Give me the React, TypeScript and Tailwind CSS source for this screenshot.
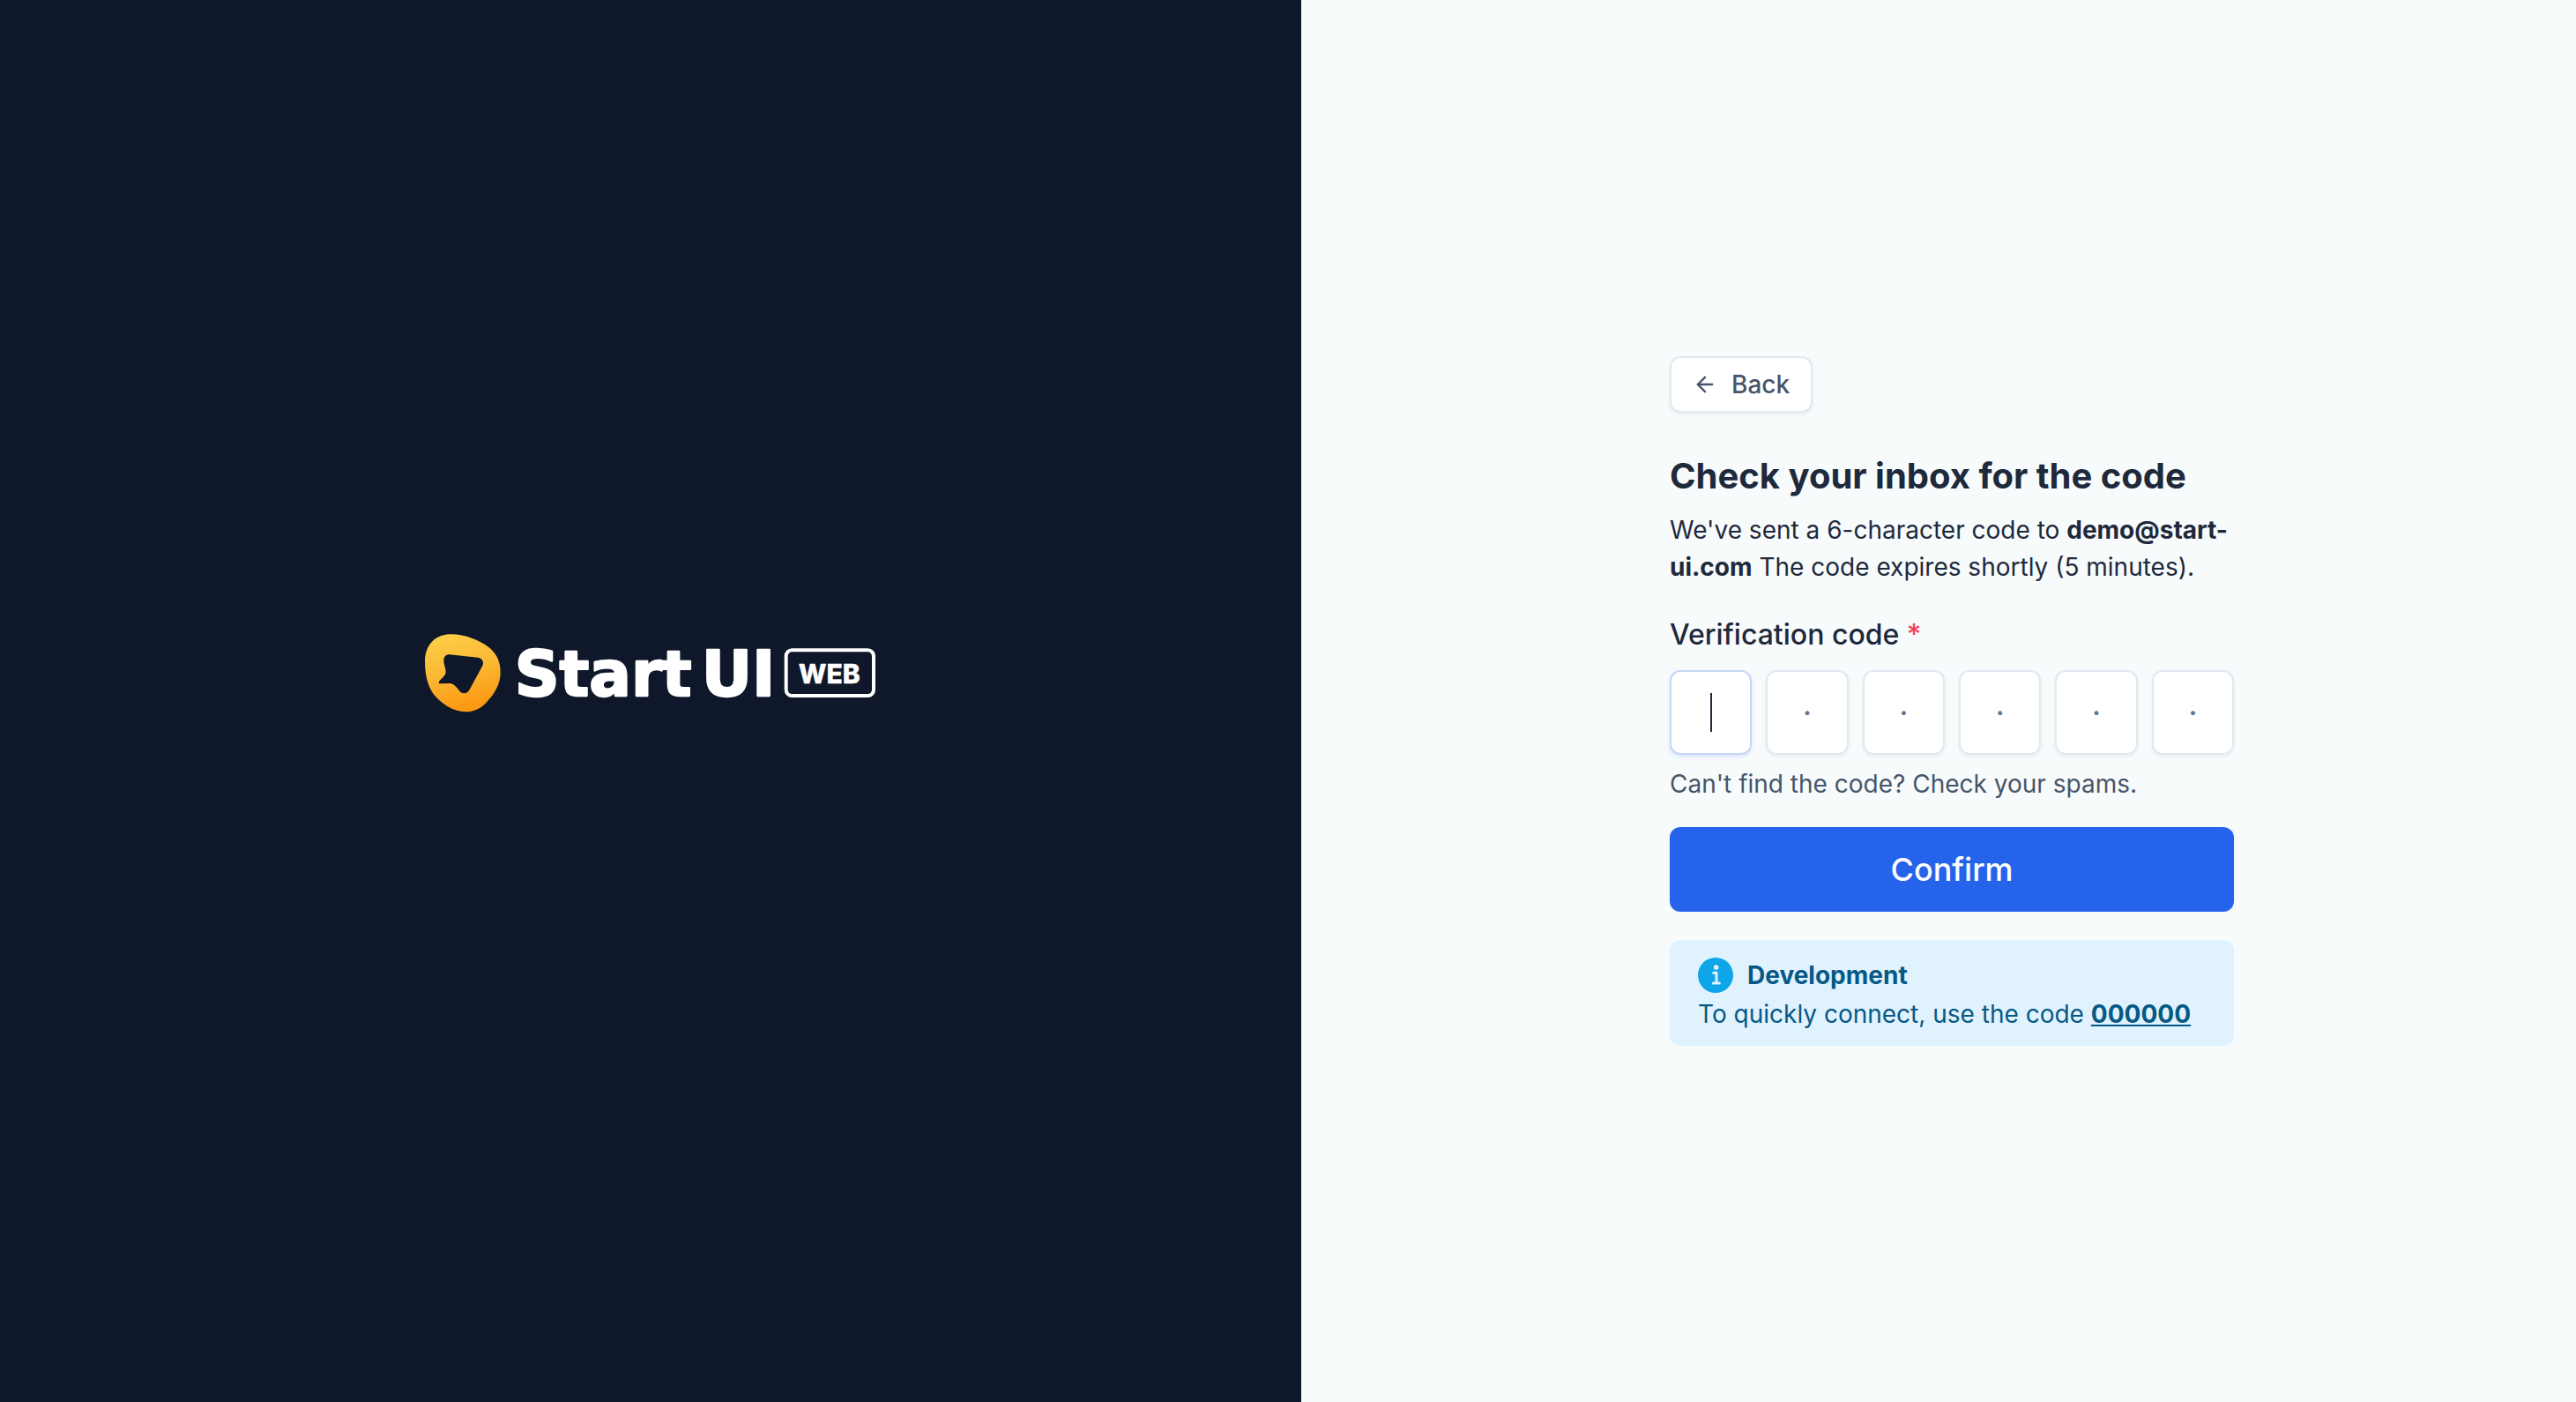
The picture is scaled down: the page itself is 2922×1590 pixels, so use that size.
import React, { useState } from "react";
import { ArrowLeft } from "lucide-react";

function Logo() {
  return (
    <svg
      className="h-[89px] w-[512px]"
      viewBox="66 56 1536 267"
      role="img"
      aria-label="Start UI Web"
    >
      <defs>
        <linearGradient id="blob" x1="0" y1="0" x2="0.25" y2="1">
          <stop offset="0" stopColor="#fdd04a" />
          <stop offset="0.55" stopColor="#fbb833" />
          <stop offset="1" stopColor="#fb9a14" />
        </linearGradient>
      </defs>
      <path
        fill="url(#blob)"
        fillRule="evenodd"
        d="M155 57C205 57 250 78 282 100C310 122 324 150 323 190C322 230 300 262 277 287C258 308 235 321 205 321C165 321 135 300 108 275C78 246 66 200 66 150C66 100 95 57 155 57Z M150 126C136 126 130 134 130 148C130 160 137 172 137 185C137 195 130 200 116 215C112 220 112 225 118 225L148 224C160 224 168 230 178 243C184 252 190 258 200 258C208 258 213 253 218 245L262 164C268 150 260 138 246 136Z"
      />
      <g fill="#ffffff" stroke="#ffffff" strokeLinejoin="round">
        <g
          fontFamily="DejaVu Sans, sans-serif"
          fontSize="212"
          fontWeight="700"
          strokeWidth="7"
        >
          <text x="371" y="267">
            Start
          </text>
          <text x="1007" y="267">
            UI
          </text>
        </g>
        <text
          x="1337"
          y="223"
          fontFamily="Inter, sans-serif"
          fontSize="90"
          fontWeight="800"
          strokeWidth="1"
        >
          WEB
        </text>
      </g>
      <rect
        x="1295"
        y="111"
        width="298"
        height="155"
        rx="20"
        fill="none"
        stroke="#ffffff"
        strokeWidth="12"
      />
    </svg>
  );
}

function InfoIcon() {
  return (
    <svg className="size-10 shrink-0" viewBox="0 0 120 120" aria-hidden="true">
      <circle cx="60" cy="60" r="60" fill="#0ea5e9" />
      <circle cx="62" cy="33" r="8.5" fill="#e0f2fe" />
      <path
        d="M53 52H63V87M52 87H73"
        fill="none"
        stroke="#e0f2fe"
        strokeWidth="9"
        strokeLinecap="round"
        strokeLinejoin="round"
      />
    </svg>
  );
}

function CodeInput() {
  const [digits, setDigits] = useState(["", "", "", "", "", ""]);
  return (
    <div className="mt-4 grid grid-cols-6 gap-4">
      {digits.map((digit, i) => (
        <div key={i} className="relative">
          <input
            id={`code-${i}`}
            aria-label={`Character ${i + 1}`}
            value={digit}
            maxLength={1}
            placeholder={i === 0 ? "" : "·"}
            onChange={(e) =>
              setDigits(digits.map((d, j) => (j === i ? e.target.value : d)))
            }
            className={
              i === 0
                ? "h-24 w-full rounded-xl border-2 border-[#c7d7f6] bg-white text-center text-4xl text-[#1e293b] shadow-[0_2px_4px_rgba(37,99,235,0.16)] outline-none"
                : "h-24 w-full rounded-xl border-2 border-[#e2e8f0] bg-white text-center text-4xl text-[#1e293b] shadow-[0_2px_4px_rgba(15,23,42,0.06)] outline-none placeholder:text-[#64748b]"
            }
          />
          {i === 0 && digit === "" && (
            <span className="pointer-events-none absolute inset-0 flex items-center justify-center">
              <span className="h-11 w-0.5 bg-[#1e293b]" />
            </span>
          )}
        </div>
      ))}
    </div>
  );
}

export default function App() {
  return (
    <div className="grid min-h-screen grid-cols-[1476fr_1446fr] bg-[#f7fbfc] font-[Inter,sans-serif] text-[#1e293b]">
      <aside className="flex items-center justify-center bg-[#0f172a] pb-16">
        <Logo />
      </aside>
      <main className="flex items-center justify-center pl-[30px]">
        <form
          className="flex w-full max-w-[640px] flex-col"
          onSubmit={(e) => e.preventDefault()}
        >
          <button
            type="button"
            className="flex h-16 items-center gap-4 self-start rounded-xl border-2 border-[#e2e8f0] bg-white px-6 text-[28px] font-medium text-[#475569] shadow-[0_2px_4px_rgba(15,23,42,0.06)]"
          >
            <ArrowLeft className="size-7" aria-hidden="true" />
            Back
          </button>

          <h1 className="mt-12 text-[40px] leading-12 font-bold">
            Check your inbox for the code
          </h1>
          <p className="mt-4 text-[28px] leading-[42px]">
            We've sent a 6-character code to <strong>demo@start-ui.com</strong>{" "}
            The code expires shortly (5 minutes).
          </p>

          <label
            htmlFor="code-0"
            className="mt-8 text-[32px] leading-12 font-medium"
          >
            Verification code <span className="text-[#f43f5e]">*</span>
          </label>
          <CodeInput />
          <p className="mt-3 text-[28px] leading-[42px] text-[#475569]">
            Can't find the code? Check your spams.
          </p>

          <button
            type="submit"
            className="mt-7 h-24 rounded-xl bg-[#2563eb] text-4xl font-medium text-white"
          >
            Confirm
          </button>

          <section className="mt-8 rounded-xl bg-[#e0f2fe] px-8 pt-5 pb-4 text-[28px] leading-10 text-[#075985]">
            <h2 className="flex items-center gap-4 font-bold">
              <InfoIcon />
              Development
            </h2>
            <p className="mt-1">
              To quickly connect, use the code{" "}
              <button type="button" className="font-bold underline">
                000000
              </button>
            </p>
          </section>
        </form>
      </main>
    </div>
  );
}
